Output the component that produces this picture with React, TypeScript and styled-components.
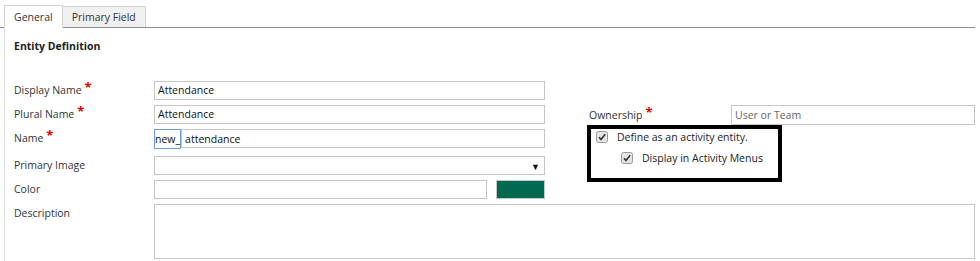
import { FC, ReactNode } from "react";
import styled, { createGlobalStyle } from "styled-components";

const GlobalStyle = createGlobalStyle`
  body {
    margin: 0;
    background: #ffffff;
    font-family: "Open Sans", "Noto Sans", sans-serif;
  }
`;

const Page = styled.div`
  width: 980px;
  height: 261px;
  overflow: hidden;
  padding-top: 5px;
  box-sizing: border-box;
`;

const TabBar = styled.div`
  display: flex;
  align-items: flex-end;
  padding-left: 4px;
  height: 22px;
  border-bottom: 1px solid #8c8c99;
  margin-right: 5px;
`;

const Tab = styled.div<{ $active?: boolean }>`
  display: flex;
  align-items: center;
  height: ${(p) => (p.$active ? "23px" : "21px")};
  margin-bottom: ${(p) => (p.$active ? "-1px" : "0")};
  padding: 0 9px;
  box-sizing: border-box;
  border: 1px solid #d4d4d4;
  border-bottom: ${(p) => (p.$active ? "1px solid #ffffff" : "none")};
  background: ${(p) => (p.$active ? "#ffffff" : "#f0f0f0")};
  font-size: 10.5px;
  color: #333333;
  & + & {
    border-left: none;
  }
`;

const Content = styled.div`
  margin-left: 4px;
  border-left: 1px solid #dddddd;
  padding: 10px 0 0 9px;
  height: 240px;
  box-sizing: border-box;
`;

const SectionTitle = styled.h3`
  margin: 0;
  font-size: 10.5px;
  font-weight: 700;
  color: #222222;
  line-height: 16px;
`;

const Columns = styled.div`
  display: flex;
  margin-top: 24px;
`;

const LeftCol = styled.div`
  width: 531px;
  display: flex;
  flex-direction: column;
`;

const Row = styled.div<{ $tall?: boolean }>`
  display: flex;
  align-items: ${(p) => (p.$tall ? "flex-start" : "center")};
  box-sizing: border-box;
  padding-top: ${(p) => (p.$tall ? "3px" : "0")};
  height: ${(p) => (p.$tall ? "27px" : "24px")};
`;

const Label = styled.div<{ $width?: number }>`
  width: ${(p) => p.$width ?? 140}px;
  flex-shrink: 0;
  font-size: 10.5px;
  line-height: 19px;
  color: #333333;
`;

const Required = styled.span`
  color: #e00000;
  font-size: 13px;
  font-weight: 700;
  margin-left: 3px;
  position: relative;
  top: -2px;
  line-height: 0;
`;

const Field = styled.div<{ $muted?: boolean }>`
  flex: 1;
  height: 19px;
  box-sizing: border-box;
  border: 1px solid #c6c6c6;
  padding: 0 3px;
  display: flex;
  align-items: center;
  font-size: 10.5px;
  color: ${(p) => (p.$muted ? "#666666" : "#111111")};
  position: relative;
`;

const Prefix = styled.div`
  height: 20px;
  box-sizing: border-box;
  border: 1px solid #6d9ed4;
  padding: 0;
  display: flex;
  align-items: center;
  font-size: 10.5px;
  color: #111111;
`;

const Arrow = styled.span`
  position: absolute;
  right: 4px;
  top: 3px;
  font-size: 9px;
  color: #111111;
`;

const Swatch = styled.div`
  width: 49px;
  height: 19px;
  box-sizing: border-box;
  border: 1px solid #c6c6c6;
  background: #006a50;
  margin-left: 9px;
`;

const RightCol = styled.div`
  margin-left: 42px;
  padding-top: 27px;
  flex: 1;
  display: flex;
  flex-direction: column;
`;

const OwnerRow = styled.div`
  display: flex;
  align-items: center;
  height: 20px;
  padding-left: 2px;
  margin-right: 5px;
`;

const OwnerField = styled(Field)`
  height: 20px;
`;

const ActivityBox = styled.div`
  width: 195px;
  height: 57px;
  box-sizing: border-box;
  border: 4px solid #000000;
  padding: 1px 0 0 5px;
  display: flex;
  flex-direction: column;
  gap: 7px;
`;

const CheckRow = styled.div<{ $indent?: number }>`
  display: flex;
  align-items: center;
  gap: 9px;
  padding-left: ${(p) => p.$indent ?? 0}px;
  font-size: 10.5px;
  color: #222222;
  height: 14px;
`;

const DescRow = styled.div`
  display: flex;
  align-items: flex-start;
  margin-top: 3px;
`;

const TextArea = styled.div`
  flex: 1;
  height: 55px;
  box-sizing: border-box;
  border: 1px solid #c6c6c6;
  margin-right: 5px;
`;

const CheckBox: FC = () => (
  <svg width="12" height="12" viewBox="0 0 12 12">
    <rect x="0.5" y="0.5" width="11" height="11" rx="2" fill="#e4e4e4" stroke="#9a9a9a" />
    <path d="M3 6.2 L5 8.4 L9.2 3.2" fill="none" stroke="#333333" strokeWidth="1.6" />
  </svg>
);

const FieldRow: FC<{
  label: string;
  required?: boolean;
  tall?: boolean;
  children: ReactNode;
}> = ({ label, required, tall, children }) => (
  <Row $tall={tall}>
    <Label>
      {label}
      {required && <Required>*</Required>}
    </Label>
    {children}
  </Row>
);

export default function App() {
  return (
    <Page>
      <GlobalStyle />
      <TabBar>
        <Tab $active>General</Tab>
        <Tab>Primary Field</Tab>
      </TabBar>
      <Content>
        <SectionTitle>Entity Definition</SectionTitle>
        <Columns>
          <LeftCol>
            <FieldRow label="Display Name" required>
              <Field>Attendance</Field>
            </FieldRow>
            <FieldRow label="Plural Name" required>
              <Field>Attendance</Field>
            </FieldRow>
            <FieldRow label="Name" required tall>
              <Prefix>new_</Prefix>
              <Field>attendance</Field>
            </FieldRow>
            <FieldRow label="Primary Image">
              <Field>
                <Arrow>▼</Arrow>
              </Field>
            </FieldRow>
            <FieldRow label="Color">
              <Field />
              <Swatch />
            </FieldRow>
          </LeftCol>
          <RightCol>
            <OwnerRow>
              <Label $width={142}>
                Ownership<Required>*</Required>
              </Label>
              <OwnerField $muted>User or Team</OwnerField>
            </OwnerRow>
            <ActivityBox>
              <CheckRow>
                <CheckBox />
                Define as an activity entity.
              </CheckRow>
              <CheckRow $indent={25}>
                <CheckBox />
                Display in Activity Menus
              </CheckRow>
            </ActivityBox>
          </RightCol>
        </Columns>
        <DescRow>
          <Label>Description</Label>
          <TextArea />
        </DescRow>
      </Content>
    </Page>
  );
}
